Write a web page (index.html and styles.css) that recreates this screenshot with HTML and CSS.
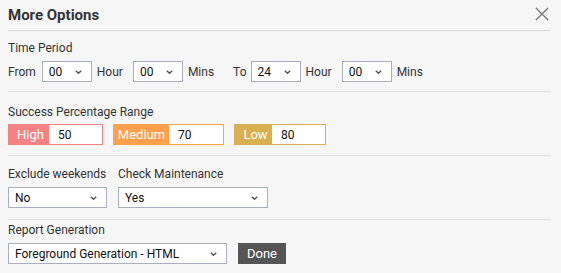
FILE: index.html
```html
<!DOCTYPE html>
<html lang="en">
<head>
    <meta charset="UTF-8" />
    <title>More Options</title>
    <link rel="stylesheet" href="styles.css">
</head>
<body>
<div class="dialog">
    <div class="dialog-head">
        <h2>More Options</h2>
        <span class="close">
            <svg width="14" height="14" viewBox="0 0 14 14"><path d="M1 1L13 13M13 1L1 13" stroke="#777" stroke-width="1.4" fill="none"/></svg>
        </span>
    </div>

    <!-- Time period -->
    <div class="section s-time">
        <div class="label">Time Period</div>
        <div class="row">
            <span class="txt">From</span>
            <span class="sel w50"><select><option>00</option></select><svg class="chev" width="7" height="4" viewBox="0 0 7 4"><path d="M0.8 0.8L3.5 3.2L6.2 0.8" stroke="#555" stroke-width="1.5" fill="none"/></svg></span>
            <span class="txt gap-l">Hour</span>
            <span class="sel w50 gap-l2"><select><option>00</option></select><svg class="chev" width="7" height="4" viewBox="0 0 7 4"><path d="M0.8 0.8L3.5 3.2L6.2 0.8" stroke="#555" stroke-width="1.5" fill="none"/></svg></span>
            <span class="txt gap-l">Mins</span>
            <span class="txt gap-to">To</span>
            <span class="sel w50"><select><option>24</option></select><svg class="chev" width="7" height="4" viewBox="0 0 7 4"><path d="M0.8 0.8L3.5 3.2L6.2 0.8" stroke="#555" stroke-width="1.5" fill="none"/></svg></span>
            <span class="txt gap-l">Hour</span>
            <span class="sel w50 gap-l2"><select><option>00</option></select><svg class="chev" width="7" height="4" viewBox="0 0 7 4"><path d="M0.8 0.8L3.5 3.2L6.2 0.8" stroke="#555" stroke-width="1.5" fill="none"/></svg></span>
            <span class="txt gap-l">Mins</span>
        </div>
    </div>

    <!-- Success percentage -->
    <div class="section s-pct">
        <div class="label">Success Percentage Range</div>
        <div class="row pct-row">
            <div class="pct high"><span>High</span><input type="text" value="50" /></div>
            <div class="pct medium"><span>Medium</span><input type="text" value="70" /></div>
            <div class="pct low"><span>Low</span><input type="text" value="80" /></div>
        </div>
    </div>

    <!-- Weekends / maintenance -->
    <div class="section s-flags">
        <div class="cols">
            <div>
                <div class="label">Exclude weekends</div>
                <span class="sel w99"><select><option>No</option></select><svg class="chev" width="7" height="4" viewBox="0 0 7 4"><path d="M0.8 0.8L3.5 3.2L6.2 0.8" stroke="#555" stroke-width="1.5" fill="none"/></svg></span>
            </div>
            <div>
                <div class="label">Check Maintenance</div>
                <span class="sel w150"><select><option>Yes</option></select><svg class="chev" width="7" height="4" viewBox="0 0 7 4"><path d="M0.8 0.8L3.5 3.2L6.2 0.8" stroke="#555" stroke-width="1.5" fill="none"/></svg></span>
            </div>
        </div>
    </div>

    <!-- Report -->
    <div class="section s-report">
        <div class="label">Report Generation</div>
        <div class="row">
            <span class="sel w219"><select><option>Foreground Generation - HTML</option></select><svg class="chev" width="7" height="4" viewBox="0 0 7 4"><path d="M0.8 0.8L3.5 3.2L6.2 0.8" stroke="#555" stroke-width="1.5" fill="none"/></svg></span>
            <button type="button">Done</button>
        </div>
    </div>
</div>
</body>
</html>
```

FILE: styles.css
```css
body {
    margin: 0;
    background: #f6f6f6;
    font-family: Roboto, "Liberation Sans", sans-serif;
    font-size: 12px;
    color: #333;
}
.dialog {
    padding: 0 10px 0 8px;
}
.dialog-head {
    display: flex;
    justify-content: space-between;
    align-items: center;
    height: 30px;
    border-bottom: 1px solid #dcdcdc;
}
h2 {
    margin: 0;
    font-size: 15px;
    font-weight: 700;
    color: #333;
}
.close {
    display: flex;
    margin-right: 2px;
    margin-top: -2px;
}
.section {
    border-bottom: 1px solid #dcdcdc;
}
.s-time { padding: 9px 0 9px; }
.s-pct { padding: 12px 0 10px; }
.s-flags { padding: 10px 0 11px; }
.s-report { padding: 2px 0 0; border-bottom: none; }
.label {
    line-height: 16px;
    margin-bottom: 5px;
}
.s-pct .label {
    margin-bottom: 4px;
}
.row {
    display: flex;
    align-items: center;
}
.txt {
    font-size: 12px;
}
.txt:first-child {
    margin-right: 6px;
}
.gap-l {
    margin-left: 5px;
}
.gap-l2 {
    margin-left: 10px;
}
.gap-to {
    margin-left: 19px;
    margin-right: 4px;
}
.sel {
    position: relative;
    display: inline-block;
    height: 21px;
}
.sel select {
    appearance: none;
    -webkit-appearance: none;
    width: 100%;
    height: 21px;
    margin: 0;
    padding: 0 0 0 6px;
    border: 1px solid #a9aec0;
    border-radius: 0;
    background: #fff;
    font-family: Roboto, "Liberation Sans", sans-serif;
    font-size: 12px;
    color: #111;
}
.sel .chev {
    position: absolute;
    right: 10px;
    top: 9px;
    pointer-events: none;
}
.w50 { width: 50px; }
.w99 { width: 99px; }
.w150 { width: 150px; }
.w219 { width: 219px; }

.pct-row {
    gap: 10px;
}
.pct {
    display: flex;
    height: 21px;
    border: 1px solid;
    box-sizing: border-box;
}
.pct span {
    display: flex;
    align-items: center;
    justify-content: center;
    color: #fff;
    font-size: 13px;
}
.pct input {
    width: 53px;
    box-sizing: border-box;
    border: none;
    margin: 0;
    padding: 0 0 0 9px;
    font-family: Roboto, "Liberation Sans", sans-serif;
    font-size: 12px;
    color: #111;
    background: #fff;
}
.high { border-color: #f58282; }
.high span { background: #f58282; width: 40px; padding-left: 3px; box-sizing: border-box; }
.medium { border-color: #ffa04d; }
.medium span { background: #ffa04d; width: 55px; }
.low { border-color: #d9b04f; }
.low span { background: #d9b04f; width: 37px; padding-left: 4px; box-sizing: border-box; }
.medium input { width: 54px; }

.cols {
    display: flex;
    gap: 11px;
}
button {
    margin-left: 11px;
    height: 21px;
    padding: 0 9px;
    background: #555;
    border: none;
    border-radius: 0;
    color: #fff;
    font-family: Roboto, "Liberation Sans", sans-serif;
    font-size: 13px;
    cursor: pointer;
}
```
